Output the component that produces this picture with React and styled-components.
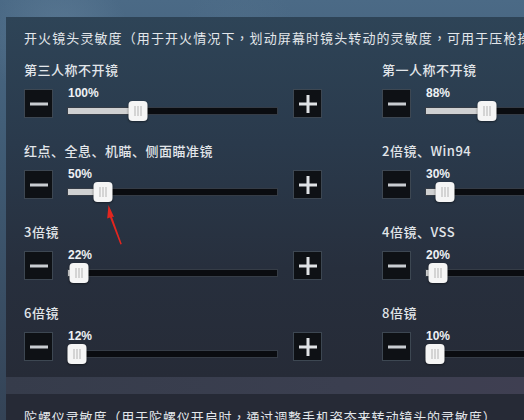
import React from 'react';
import styled, { createGlobalStyle } from 'styled-components';

const GlobalStyle = createGlobalStyle`
  html, body {
    margin: 0;
    padding: 0;
    overflow: hidden;
    background: #34495d;
  }
  * {
    box-sizing: border-box;
  }
`;

const Screen = styled.div`
  position: relative;
  width: 524px;
  height: 420px;
  overflow: hidden;
  padding-top: 17px;
  padding-left: 6px;
  font-family: "Noto Sans CJK SC", "Noto Sans", sans-serif;
  color: #dfe4e9;
  background:
    radial-gradient(circle at 60px 40px, rgba(120, 150, 175, 0.35) 0, rgba(120, 150, 175, 0) 70px),
    radial-gradient(circle at 240px 40px, rgba(90, 120, 145, 0.25) 0, rgba(90, 120, 145, 0) 60px),
    linear-gradient(180deg, #4b6a86 0%, #3f5a73 40%, #344356 100%);
`;

const Panel = styled.section`
  width: 560px;
  padding: ${({ compact }) => (compact ? '13px 0 0 18px' : '11px 0 16px 18px')};
  background: ${({ compact }) =>
    compact
      ? '#262a36'
      : 'linear-gradient(180deg, #2e4457 0%, #2a3a4c 35%, #272f3d 70%, #262b37 100%)'};
`;

const Divider = styled.div`
  width: 560px;
  height: 17px;
  background: linear-gradient(90deg, #363c4b 0%, #3b3f50 60%, #403f52 100%);
`;

const Title = styled.h2`
  margin: 0 0 12px;
  font-family: "Noto Sans CJK TC", "Noto Sans CJK SC", sans-serif;
  font-size: 13px;
  font-weight: 400;
  line-height: 20px;
  letter-spacing: ${({ spacing }) => spacing || '1.1px'};
  white-space: nowrap;
  color: #e3e7eb;
`;

const Grid = styled.div`
  display: grid;
  grid-template-columns: 298px 298px;
  column-gap: 60px;
  row-gap: 23px;
`;

const Setting = styled.div`
  display: flex;
  flex-direction: column;
  gap: 9px;
`;

const Label = styled.div`
  font-size: 13px;
  font-weight: 500;
  line-height: 20px;
  letter-spacing: 0.5px;
  white-space: nowrap;
  color: #e2e6ea;
`;

const Controls = styled.div`
  display: flex;
  align-items: flex-start;
  height: 29px;
`;

const StepButton = styled.button`
  flex: none;
  width: 29px;
  height: 29px;
  padding: 0;
  display: flex;
  align-items: center;
  justify-content: center;
  background: #0e1115;
  border: 1px solid #3d4752;
  cursor: pointer;
`;

const Slider = styled.div`
  flex: none;
  width: 211px;
  margin: -3px 15px 0 14px;
  display: flex;
  flex-direction: column;
`;

const Percent = styled.div`
  font-family: "Liberation Sans", Arial, sans-serif;
  font-size: 12px;
  font-weight: 700;
  line-height: 14px;
  color: #eef1f4;
  padding-left: 1px;
`;

const Track = styled.div`
  position: relative;
  margin-top: 7px;
  height: 8px;
  background: #0a0c10;
  border: 1px solid #353c46;
`;

const Fill = styled.div`
  position: absolute;
  left: 0;
  top: 0;
  bottom: 0;
  background: #cfd0d1;
`;

const Thumb = styled.div`
  position: absolute;
  top: 50%;
  width: 19px;
  height: 20px;
  transform: translate(-50%, -50%);
  background: #f5f5f5;
  border-radius: 4px;
  box-shadow: 0 1px 2px rgba(0, 0, 0, 0.4);
  display: flex;
  align-items: center;
  justify-content: center;
  gap: 2px;

  span {
    width: 1px;
    height: 10px;
    background: #b4b4b4;
  }
`;

const Arrow = styled.svg`
  position: absolute;
  left: 0;
  top: 0;
  pointer-events: none;
`;

const Minus = () => (
  <svg width="18" height="18" viewBox="0 0 18 18">
    <rect x="0" y="7.5" width="18" height="3" fill="#c9cdd1" />
  </svg>
);

const Plus = () => (
  <svg width="18" height="18" viewBox="0 0 18 18">
    <rect x="0" y="7.5" width="18" height="3" fill="#dfe2e5" />
    <rect x="7.5" y="0" width="3" height="18" fill="#dfe2e5" />
  </svg>
);

const SliderControl = ({ label, value, pos }) => (
  <Setting>
    <Label>{label}</Label>
    <Controls>
      <StepButton aria-label="减少">
        <Minus />
      </StepButton>
      <Slider>
        <Percent>{value}%</Percent>
        <Track>
          <Fill style={{ width: pos }} />
          <Thumb style={{ left: pos }}>
            <span />
            <span />
            <span />
          </Thumb>
        </Track>
      </Slider>
      <StepButton aria-label="增加">
        <Plus />
      </StepButton>
    </Controls>
  </Setting>
);

const settings = [
  { label: '第三人称不开镜', value: 100, pos: 70 },
  { label: '第一人称不开镜', value: 88, pos: 61 },
  { label: '红点、全息、机瞄、侧面瞄准镜', value: 50, pos: 35 },
  { label: '2倍镜、Win94', value: 30, pos: 19 },
  { label: '3倍镜', value: 22, pos: 11 },
  { label: '4倍镜、VSS', value: 20, pos: 12 },
  { label: '6倍镜', value: 12, pos: 9 },
  { label: '8倍镜', value: 10, pos: 9 },
];

export default function App() {
  return (
    <>
      <GlobalStyle />
      <Screen>
        <Panel>
          <Title>开火镜头灵敏度（用于开火情况下，划动屏幕时镜头转动的灵敏度，可用于压枪操作）</Title>
          <Grid>
            {settings.map((s) => (
              <SliderControl key={s.label} {...s} />
            ))}
          </Grid>
        </Panel>
        <Divider />
        <Panel compact>
          <Title spacing="0.9px">陀螺仪灵敏度（用于陀螺仪开启时，通过调整手机姿态来转动镜头的灵敏度）</Title>
        </Panel>
        <Arrow width="524" height="420" viewBox="0 0 524 420">
          <path
            d="M108.5 205 L114 217 L112 216.8 L121.8 244 L120.4 244.6 L110 217.6 L107.2 218.6 Z"
            fill="#e3261f"
          />
        </Arrow>
      </Screen>
    </>
  );
}
